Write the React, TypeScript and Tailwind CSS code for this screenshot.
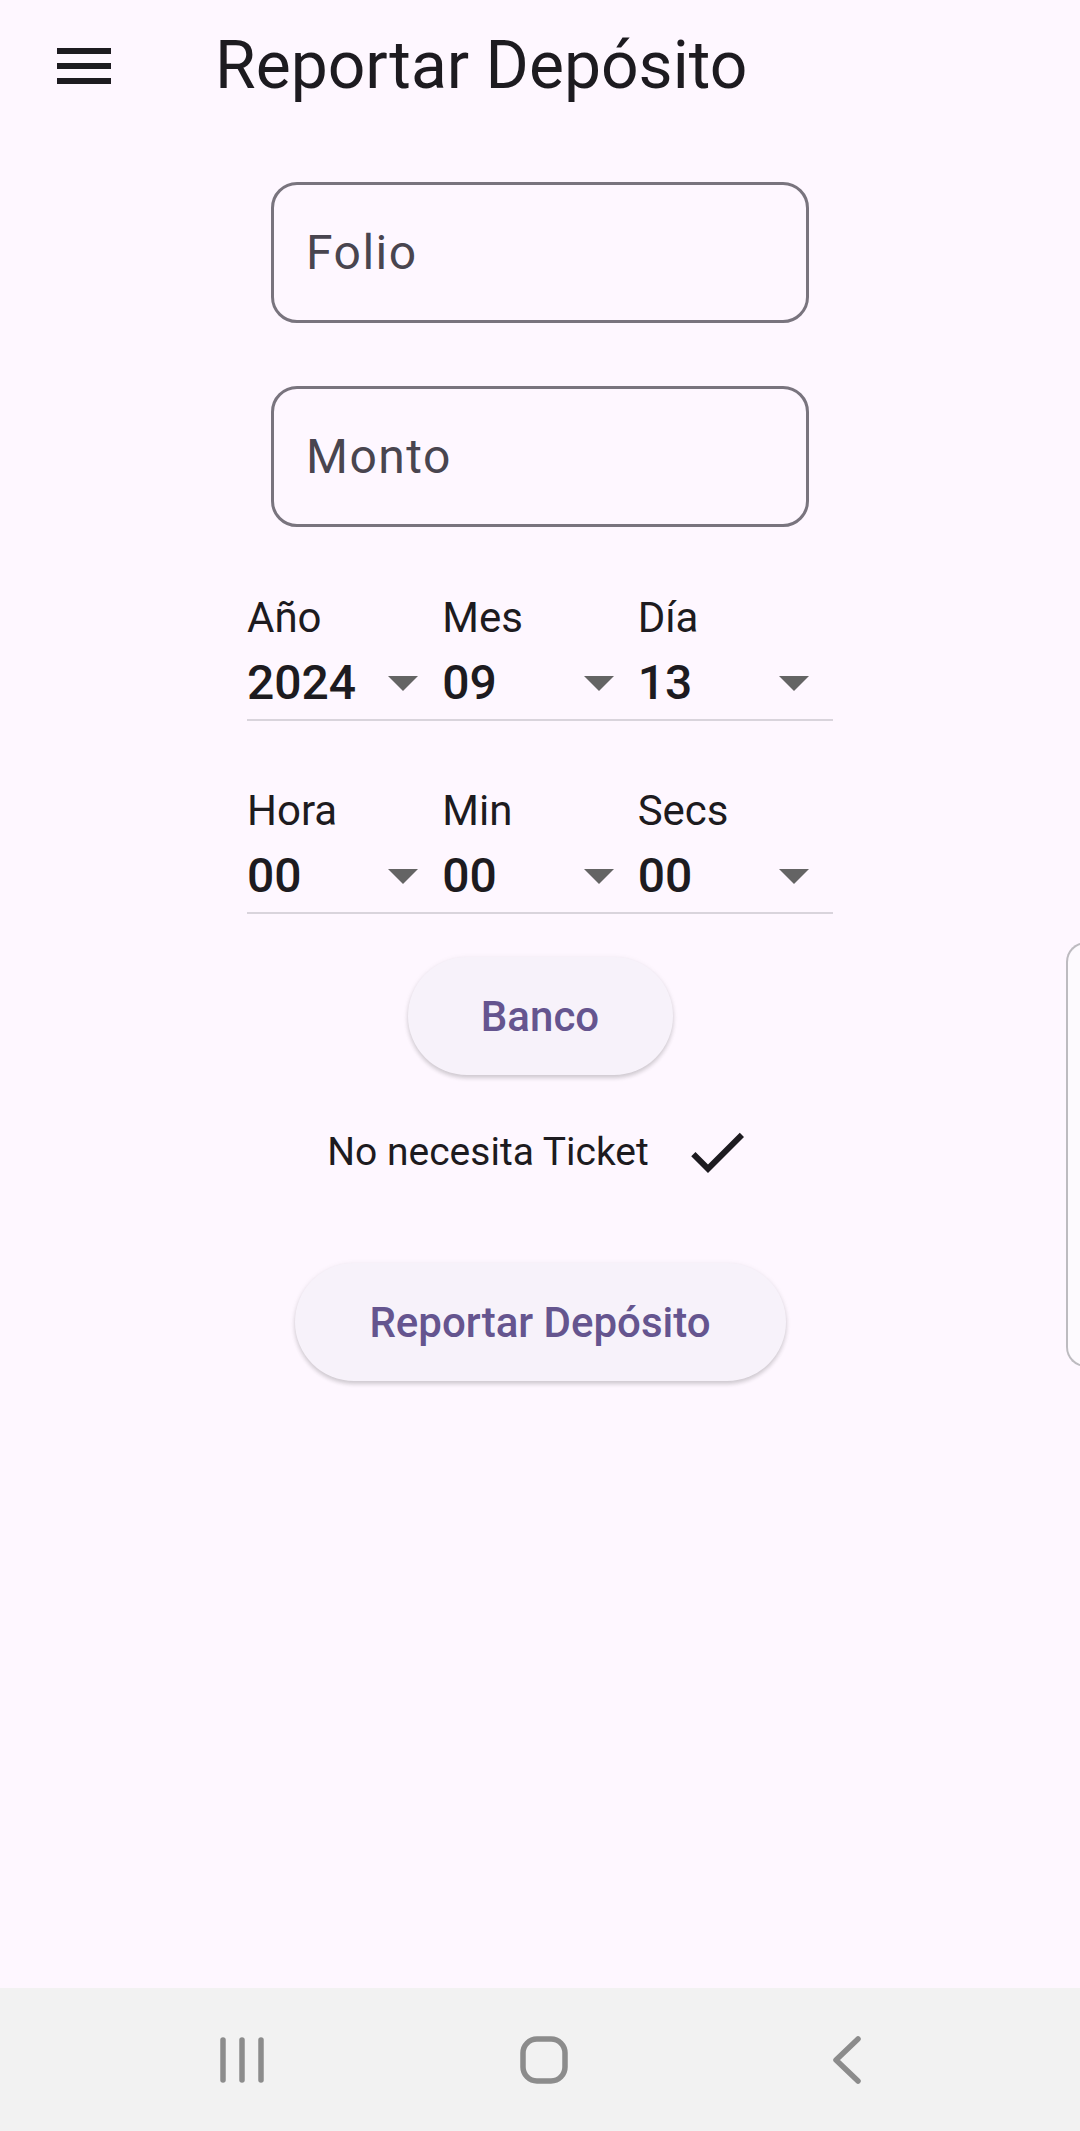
import React from "react";

function MenuIcon() {
  return (
    <svg width="72" height="72" viewBox="0 0 24 24" aria-hidden>
      <path d="M3 18h18v-2H3v2zm0-5h18v-2H3v2zm0-7v2h18V6H3z" fill="#1D1B20" />
    </svg>
  );
}

function ArrowDrop() {
  return (
    <svg width="30" height="15" viewBox="0 0 10 5" aria-hidden>
      <path d="M0 0l5 5 5-5z" fill="#646464" />
    </svg>
  );
}

function Field({ label, className = "" }: { label: string; className?: string }) {
  return (
    <div
      className={`flex h-[141px] w-[538px] items-center rounded-[26px] border-[3px] border-[#79747E] pl-[32px] ${className}`}
    >
      <span className="text-[48px] tracking-[1.5px] text-[#49454F]">{label}</span>
    </div>
  );
}

function Drop({ label, value }: { label: string; value: string }) {
  return (
    <div className="flex flex-col">
      <span className="text-[42px] leading-[48px] text-[#1D1B20]">{label}</span>
      <div className="mt-[5px] flex h-[74px] items-center justify-between border-b-2 border-[#D9D4DC] pr-[24px]">
        <span className="text-[48px] font-medium leading-[72px] text-[#1D1B20]">{value}</span>
        <ArrowDrop />
      </div>
    </div>
  );
}

function PillButton({ label, width, className = "" }: { label: string; width: string; className?: string }) {
  return (
    <button
      type="button"
      className={`flex h-[118px] items-center justify-center rounded-full bg-[#F7F2FA] text-[42px] font-medium text-[#65558F] shadow-[0_3px_4px_rgba(0,0,0,0.16),0_1px_6px_rgba(0,0,0,0.06)] ${width} ${className}`}
    >
      {label}
    </button>
  );
}

export default function App() {
  return (
    <div className="relative flex min-h-[2131px] w-[1080px] flex-col overflow-hidden bg-[#FEF7FF] font-['Roboto',sans-serif]">
      <header className="flex h-[132px] items-center pl-[48px]">
        <MenuIcon />
        <h1 className="ml-[95px] text-[66px] leading-none text-[#1D1B20]">Reportar Depósito</h1>
      </header>

      <main className="flex flex-1 flex-col items-center">
        <Field label="Folio" className="mt-[50px]" />
        <Field label="Monto" className="mt-[63px]" />

        <div className="mt-[67px] grid w-[586px] grid-cols-3">
          <Drop label="Año" value="2024" />
          <Drop label="Mes" value="09" />
          <Drop label="Día" value="13" />
        </div>
        <div className="mt-[66px] grid w-[586px] grid-cols-3">
          <Drop label="Hora" value="00" />
          <Drop label="Min" value="00" />
          <Drop label="Secs" value="00" />
        </div>

        <PillButton label="Banco" width="w-[265px]" className="mt-[43px]" />

        <div className="mt-[41px] flex h-[72px] items-center gap-[32px]">
          <span className="text-[39px] text-[#1D1B20]">No necesita Ticket</span>
          <svg width="72" height="72" viewBox="0 0 24 24" aria-hidden>
            <path d="M9 16.17L4.83 12l-1.42 1.41L9 19 21 7l-1.41-1.41z" fill="#1D1B20" />
          </svg>
        </div>

        <PillButton label="Reportar Depósito" width="w-[491px]" className="mt-[75px]" />
      </main>

      <nav className="grid h-[143px] grid-cols-3 bg-[#F2F2F2] pl-[91px] pr-[82px]">
        <div className="flex items-center justify-center">
          <svg width="50" height="50" viewBox="0 0 50 50" aria-hidden>
            <g stroke="#8C8C8C" strokeWidth="5.5" strokeLinecap="round">
              <line x1="6" y1="5" x2="6" y2="45" />
              <line x1="25" y1="5" x2="25" y2="45" />
              <line x1="44" y1="5" x2="44" y2="45" />
            </g>
          </svg>
        </div>
        <div className="flex items-center justify-center">
          <svg width="48" height="48" viewBox="0 0 48 48" aria-hidden>
            <rect x="3" y="3" width="42" height="42" rx="14" fill="none" stroke="#8C8C8C" strokeWidth="5.5" />
          </svg>
        </div>
        <div className="flex items-center justify-center">
          <svg width="30" height="50" viewBox="0 0 30 50" aria-hidden>
            <path d="M26 4L4 25l22 21" fill="none" stroke="#8C8C8C" strokeWidth="5.5" strokeLinecap="round" strokeLinejoin="round" />
          </svg>
        </div>
      </nav>

      <div className="absolute left-[1066px] top-[942px] h-[425px] w-[30px] rounded-l-[20px] border-2 border-r-0 border-[#BDBBC0] bg-[#FDFAFE]" />
    </div>
  );
}
